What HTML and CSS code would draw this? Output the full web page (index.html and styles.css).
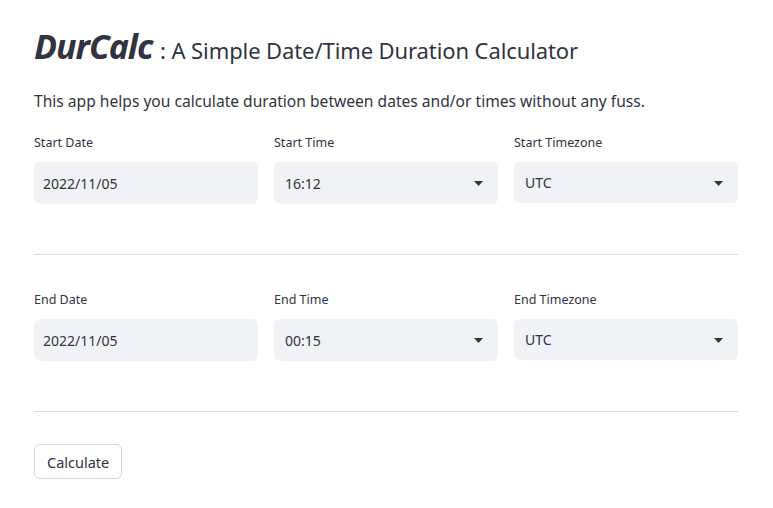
FILE: index.html
```html
<!DOCTYPE html>
<html>
<head>
<meta charset="utf-8">
<link rel="stylesheet" href="styles.css">
</head>
<body>
<main class="app">
  <h1 class="title"><em class="brand">DurCalc</em><span class="subtitle"> : A Simple Date/Time Duration Calculator</span></h1>
  <p class="intro">This app helps you calculate duration between dates and/or times without any fuss.</p>

  <section class="row first">
    <div class="field">
      <label class="label">Start Date</label>
      <div class="input date">2022/11/05</div>
    </div>
    <div class="field">
      <label class="label">Start Time</label>
      <div class="input select time"><span>16:12</span><svg class="caret" width="9" height="5" viewBox="0 0 9 5"><path d="M0 0h9L4.5 5z" fill="#31333f"/></svg></div>
    </div>
    <div class="field">
      <label class="label">Start Timezone</label>
      <div class="input select tz"><span>UTC</span><svg class="caret" width="9" height="5" viewBox="0 0 9 5"><path d="M0 0h9L4.5 5z" fill="#31333f"/></svg></div>
    </div>
  </section>

  <hr class="divider">

  <section class="row">
    <div class="field">
      <label class="label">End Date</label>
      <div class="input date">2022/11/05</div>
    </div>
    <div class="field">
      <label class="label">End Time</label>
      <div class="input select time"><span>00:15</span><svg class="caret" width="9" height="5" viewBox="0 0 9 5"><path d="M0 0h9L4.5 5z" fill="#31333f"/></svg></div>
    </div>
    <div class="field">
      <label class="label">End Timezone</label>
      <div class="input select tz"><span>UTC</span><svg class="caret" width="9" height="5" viewBox="0 0 9 5"><path d="M0 0h9L4.5 5z" fill="#31333f"/></svg></div>
    </div>
  </section>

  <hr class="divider">

  <button class="btn">Calculate</button>
</main>
</body>
</html>
```
FILE: styles.css
```css
* { box-sizing: border-box; }
html, body { margin: 0; padding: 0; background: #ffffff; }
body {
  font-family: "Noto Sans", "Open Sans", sans-serif;
  color: #31333f;
  width: 773px;
  height: 508px;
  overflow: hidden;
}
.app {
  padding: 0 35px 0 34px;
  display: flex;
  flex-direction: column;
}
.title {
  margin: 24px 0 0 0;
  font-weight: 400;
  line-height: 44px;
  height: 44px;
  white-space: nowrap;
}
.brand {
  font-size: 34px;
  font-weight: 700;
  font-style: italic;
  letter-spacing: -1px;
  margin-right: 2px;
}
.subtitle {
  font-size: 22px;
  letter-spacing: -0.1px;
}
.intro {
  margin: 22px 0 0 0;
  font-size: 15.6px;
  line-height: 22px;
}
.row {
  display: grid;
  grid-template-columns: repeat(3, 1fr);
  column-gap: 16px;
  margin-top: 37px;
}
.row.first { margin-top: 23px; }
.field {
  display: flex;
  flex-direction: column;
}
.label {
  font-size: 12.5px;
  line-height: 16px;
  margin-bottom: 11px;
}
.input {
  background: #f0f2f6;
  border-radius: 6px;
  height: 42px;
  display: flex;
  align-items: center;
  font-size: 14px;
  padding-left: 9px;
}
.select {
  padding-left: 11px;
  padding-right: 15px;
  justify-content: space-between;
}
.tz { height: 41px; }
.caret { display: block; margin-top: 1px; }
.divider {
  border: 0;
  border-top: 1px solid #dcdcdf;
  margin: 50px 0 0 0;
  height: 0;
}
.btn {
  align-self: flex-start;
  margin-top: 32px;
  height: 35px;
  padding: 0 12px;
  background: #ffffff;
  border: 1px solid #d5d6d9;
  border-radius: 6px;
  font-family: inherit;
  font-size: 14.5px;
  color: #31333f;
}
```
